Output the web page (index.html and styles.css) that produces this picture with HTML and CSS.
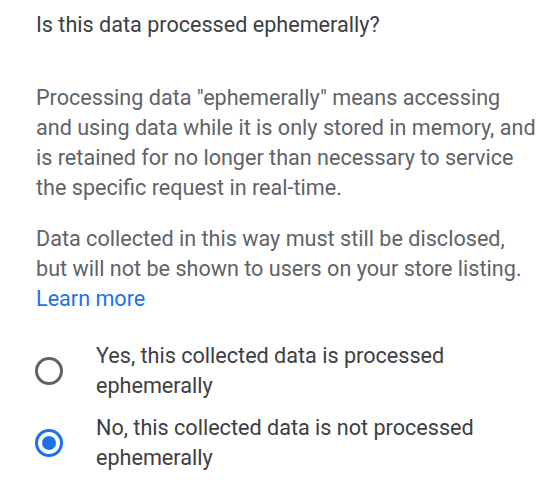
FILE: index.html
```html
<!DOCTYPE html>
<html lang="en">
<head>
<meta charset="utf-8">
<link rel="stylesheet" href="styles.css">
</head>
<body>
<main class="panel">
  <h1 class="title">Is this data processed ephemerally?</h1>
  <p class="desc">Processing data "ephemerally" means accessing and using data while it is only stored in memory, and is retained for no longer than necessary to service the specific request in real-time.</p>
  <p class="desc desc-2">Data collected in this way must still be disclosed, but will not be shown to users on your store listing. <a class="link" href="#">Learn more</a></p>
  <div class="options">
    <label class="option">
      <span class="radio"></span>
      <span class="option-text">Yes, this collected data is processed ephemerally</span>
    </label>
    <label class="option">
      <span class="radio radio-on"></span>
      <span class="option-text">No, this collected data is not processed ephemerally</span>
    </label>
  </div>
</main>
</body>
</html>
```
FILE: styles.css
```css
html, body {
  margin: 0;
  padding: 0;
  background: #ffffff;
}
body {
  font-family: Roboto, "Noto Sans", sans-serif;
  font-size: 21.6px;
  line-height: 30px;
}
.panel {
  padding: 10px 0 0 36px;
}
.title {
  margin: 0;
  font-size: 21.6px;
  font-weight: 400;
  line-height: 30px;
  color: #3c4043;
}
.desc {
  margin: 43px 0 0;
  color: #5f6368;
  width: 504px;
}
.desc-2 {
  margin-top: 21px;
}
.link {
  color: #1a73e8;
  text-decoration: none;
}
.options {
  margin-top: 27px;
  display: flex;
  flex-direction: column;
  gap: 12px;
}
.option {
  display: flex;
  align-items: center;
}
.radio {
  flex: none;
  width: 22px;
  height: 22px;
  border: 3px solid #5f6368;
  border-radius: 50%;
  box-sizing: content-box;
  margin-left: -1px;
  margin-right: 33px;
  position: relative;
}
.radio-on {
  border-color: #1a73e8;
}
.radio-on::after {
  content: "";
  position: absolute;
  left: 4px;
  top: 4px;
  width: 14px;
  height: 14px;
  border-radius: 50%;
  background: #1a73e8;
}
.option-text {
  color: #3c4043;
  width: 400px;
}
```
